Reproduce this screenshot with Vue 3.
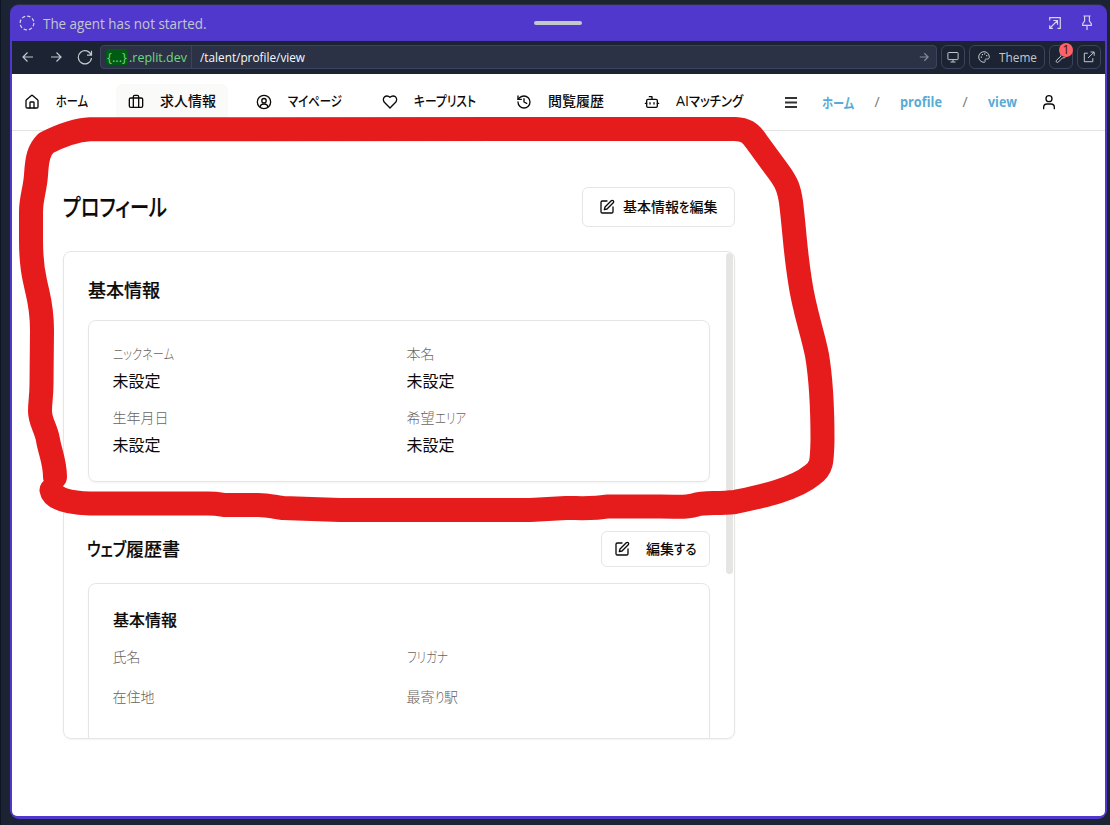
<script setup>
// Condenses a run of text horizontally to the given advance width.
const vFit = {
  mounted(el, { value }) {
    const natural = el.getBoundingClientRect().width
    el.style.width = value + 'px'
    el.style.transform = `scaleX(${value / natural})`
  },
}

const icons = {
  home: '<path d="M15 21v-8a1 1 0 0 0-1-1h-4a1 1 0 0 0-1 1v8"/><path d="M3 10a2 2 0 0 1 .709-1.528l7-5.999a2 2 0 0 1 2.582 0l7 5.999A2 2 0 0 1 21 10v9a2 2 0 0 1-2 2H5a2 2 0 0 1-2-2z"/>',
  briefcase: '<path d="M16 20V4a2 2 0 0 0-2-2h-4a2 2 0 0 0-2 2v16"/><rect width="20" height="14" x="2" y="6" rx="2"/>',
  account: '<path d="M17.500 19.500a5.500 4.500 0 0 0-11 0"/><circle cx="12" cy="10" r="3.300"/><circle cx="12" cy="12" r="10"/>',
  heart: '<path d="M19 14c1.49-1.46 3-3.21 3-5.5A5.5 5.5 0 0 0 16.5 3c-1.76 0-3 .5-4.5 2-1.5-1.5-2.74-2-4.5-2A5.5 5.5 0 0 0 2 8.5c0 2.3 1.5 4.05 3 5.5l7 7Z"/>',
  history: '<path d="M3 12a9 9 0 1 0 9-9 9.75 9.75 0 0 0-6.74 2.74L3 8"/><path d="M3 3v5h5"/><path d="M12 7v5l4 2"/>',
  bot: '<path d="M12 8V4H8"/><rect width="16" height="12" x="4" y="8" rx="2"/><path d="M2 14h2M20 14h2M15 13v2M9 13v2"/>',
}

const nav = [
  { icon: 'home', parts: [['ホーム', 32]] },
  { icon: 'briefcase', parts: [['求人情報', 56]], active: true },
  { icon: 'account', parts: [['マイページ', 54]] },
  { icon: 'heart', parts: [['キープリスト', 62]] },
  { icon: 'history', parts: [['閲覧履歴', 56]] },
  { icon: 'bot', parts: [['AI', 13], ['マッチング', 54]] },
]

const basics = [
  { label: [['ニックネーム', 61]], value: '未設定' },
  { label: [['本名', 28]], value: '未設定' },
  { label: [['生年月日', 56]], value: '未設定' },
  { label: [['希望', 28], ['エリア', 31]], value: '未設定' },
]

const resume = [
  [['氏名', 28]],
  [['フリガナ', 41]],
  [['在住地', 42]],
  [['最寄', 28], ['り', 9.5], ['駅', 14]],
]
</script>

<template>
  <div class="desk">
    <div class="window">
      <header class="agent">
        <svg class="ring" width="16" height="16" viewBox="0 0 16 16"><circle cx="8" cy="8" r="6.9" /></svg>
        <span v-fit="163.5" class="fit">The agent has not started.</span>
        <i class="grip"></i>
        <div class="agent-actions">
          <svg class="line" width="14" height="14" viewBox="0 0 14 14"><path d="M1.7 4.5V1.7h10.6v10.6H9.5M5.3 4.5h4.2v4.2M9.5 4.5l-7.8 7.8M1.7 9.2v3.1h3.1" /></svg>
          <svg class="line" width="12" height="16" viewBox="0 0 12 16"><path d="M2.5 1h7M3.6 1v5.1L1.7 8.6v1.7h8.6V8.6L8.4 6.100V1M6 10.300V15" /></svg>
        </div>
      </header>

      <div class="toolbar">
        <div class="arrows">
          <svg class="line" width="12" height="12" viewBox="0 0 12 12"><path d="M11 6H1M5.500 1.500L1 6l4.500 4.500" /></svg>
          <svg class="line" width="12" height="12" viewBox="0 0 12 12"><path d="M1 6h10M6.500 1.500L11 6l-4.500 4.500" /></svg>
          <svg class="line" width="16" height="16" viewBox="0 0 16 16"><path d="M14.500 1.700v4.500H10M14.200 6.200A6.600 6.600 0 1 0 14.500 9" /></svg>
        </div>
        <div class="address">
          <div class="host"><b v-fit="22" class="fit">{...}</b><span v-fit="58" class="fit">.replit.dev</span></div>
          <div class="path"><span v-fit="105" class="fit">/talent/profile/view</span></div>
          <svg class="go line" width="10" height="10" viewBox="0 0 10 10"><path d="M.8 5h8.400M5.300 1.200L9.200 5 5.300 8.800" /></svg>
        </div>
        <div class="tool square"><svg class="line" width="12" height="12" viewBox="0 0 12 12"><path d="M1.500 1.500h9q.6 0 .6.600v5.900q0 .6-.6.600h-9q-.6 0-.6-.6V2.100q0-.6.6-.6zM6 8.600v2.300M3.500 11h5" /></svg></div>
        <div class="tool theme">
          <svg class="line" width="12" height="12" viewBox="0 0 12 12"><path d="M6 .7a5.300 5.300 0 0 0 0 10.600c1 0 1.400-.7 1.100-1.500-.4-1 .2-1.800 1.200-1.800h1.400c1 0 1.600-.8 1.600-2A5.300 5.300 0 0 0 6 .7z" /><path d="M2.800 6.200h1.200M3.800 3.700h1.200M6.100 2.900h1.200M8.100 4.700h1.200" stroke-width="1.200" /></svg>
          <span v-fit="38" class="fit">Theme</span>
        </div>
        <div class="tool square">
          <svg class="line" width="12" height="12" viewBox="0 0 12 12"><path d="M6 4.500a3 3 0 0 1 4-3.300L8.500 3l.5 1 1 .3 1.300-1.300a3 3 0 0 1-3.700 3.800l-4.300 4.300a1.200 1.200 0 0 1-1.800-1.800L6 5z" /></svg>
          <em class="badge">1</em>
        </div>
        <div class="tool square"><svg class="line" width="12" height="12" viewBox="0 0 12 12"><path d="M4.800 2.200H1.300v8.500h8.500V7.200M7.500 1h3.700v3.700M11 1.200L5 7" /></svg></div>
      </div>

      <main class="page">
        <div class="topbar">
          <nav class="nav">
            <a v-for="item in nav" :key="item.icon" class="nav-item" :class="{ active: item.active }">
              <svg class="icon" width="16" height="16" viewBox="0 0 24 24" v-html="icons[item.icon]"></svg>
              <span class="run"><span v-for="p in item.parts" :key="p[0]" v-fit="p[1]" class="fit">{{ p[0] }}</span></span>
            </a>
          </nav>
          <svg class="menu" width="12" height="11" viewBox="0 0 12 11"><path d="M0 1h12M0 5.500h12M0 10h12" /></svg>
          <div class="crumbs">
            <b v-fit="32" class="fit">ホーム</b><i>/</i>
            <b v-fit="42" class="fit">profile</b><i>/</i>
            <b v-fit="29" class="fit">view</b>
          </div>
          <svg class="icon user" width="16" height="16" viewBox="0 0 24 24"><circle cx="12" cy="7" r="4.500" /><path d="M20 22v-2a5 5 0 0 0-5-5H9a5 5 0 0 0-5 5v2" /></svg>
        </div>

        <section class="profile">
          <div class="title-row">
            <h1><span v-fit="104" class="fit">プロフィール</span></h1>
            <button class="btn big">
              <svg class="icon" width="16" height="16" viewBox="0 0 24 24"><path d="M12 3H5a2 2 0 0 0-2 2v14a2 2 0 0 0 2 2h14a2 2 0 0 0 2-2v-7" /><path d="M18.375 2.625a2.121 2.121 0 1 1 3 3L12 15l-4 1 1-4Z" /></svg>
              <span class="run"><span v-fit="56" class="fit">基本情報</span><span v-fit="10.5" class="fit">を</span><span v-fit="28" class="fit">編集</span></span>
            </button>
          </div>

          <div class="panel">
            <h2><span v-fit="72" class="fit">基本情報</span></h2>
            <div class="card basics">
              <div v-for="(f, i) in basics" :key="i" class="field">
                <div class="label"><span v-for="p in f.label" :key="p[0]" v-fit="p[1]" class="fit">{{ p[0] }}</span></div>
                <div class="value">{{ f.value }}</div>
              </div>
            </div>
            <div class="resume-head">
              <h2><span v-fit="39" class="fit">ウェブ</span><span v-fit="54" class="fit">履歴書</span></h2>
              <button class="btn">
                <svg class="icon" width="16" height="16" viewBox="0 0 24 24"><path d="M12 3H5a2 2 0 0 0-2 2v14a2 2 0 0 0 2 2h14a2 2 0 0 0 2-2v-7" /><path d="M18.375 2.625a2.121 2.121 0 1 1 3 3L12 15l-4 1 1-4Z" /></svg>
                <span class="run"><span v-fit="28" class="fit">編集</span><span v-fit="22.5" class="fit">する</span></span>
              </button>
            </div>
            <div class="card resume">
              <h3>基本情報</h3>
              <div class="grid">
                <div v-for="(f, i) in resume" :key="i" class="label"><span v-for="p in f" :key="p[0]" v-fit="p[1]" class="fit">{{ p[0] }}</span></div>
              </div>
            </div>
            <i class="thumb"></i>
          </div>
        </section>
      </main>
    </div>

    <svg class="marker" width="1110" height="825" viewBox="0 0 1110 825">
      <path d="M55 477C55 462 50 452 48 440C46 428 40 422 40 411C40 402 41.500 396 41.500 384L42 330C42 305 38 296 35 281C32 268 31 255 31 240L31 212C31 198 35 190 36 175C37 158 39 150 46 143C60 136 75 130 90 129.300L735 129C745 129.500 750 132 756 141L778 171C787 183 789 189 791 202C795 235 795 250 800 281C804 310 812 330 817 355C822 385 822.500 420 822.500 440C822 462 822 468 812 475C794 490 758 497 735 502C716 504 704 502 695 505C685 508 680 506.500 660 506.500L607 506.500C595 509 580 508 566 508L530 510L340 510L283 508C275 507 268 505 258 505L225 505C218 504 215 503.500 208 503.500L90 503.500C70 503 53 499 51.500 490" />
    </svg>
  </div>
</template>

<style>
body {
  margin: 0;
}
</style>

<style scoped>
* {
  box-sizing: border-box;
}
.desk {
  position: relative;
  width: 1110px;
  height: 825px;
  padding: 4px 3px 6px 9px;
  background: #1c2333;
  border-left: 1px solid #0e1525;
  font-family: "Open Sans", "Noto Sans CJK JP", sans-serif;
  font-size: 14px;
  overflow: hidden;
}
.window {
  height: 815px;
  padding: 0 2px 2px;
  border-top: 1px solid #2b3245;
  border-radius: 9px;
  background: #5138cc;
  overflow: hidden;
}
.fit {
  display: inline-block;
  white-space: nowrap;
  transform-origin: 0 50%;
  font-feature-settings: "palt";
}
.line,
.icon {
  display: block;
  flex: none;
  fill: none;
  stroke: currentColor;
  stroke-width: 1.2;
}
.icon {
  stroke-width: 2;
  stroke-linecap: round;
  stroke-linejoin: round;
}
.agent {
  position: relative;
  display: flex;
  align-items: center;
  gap: 8px;
  height: 36px;
  padding: 0 12px 0 7px;
  color: #c2c8cc;
}
.ring {
  fill: none;
  stroke: #d5d8e8;
  stroke-width: 1.2;
  stroke-dasharray: 3.4 2.020;
}
.grip {
  position: absolute;
  left: 522px;
  top: 16px;
  width: 48px;
  height: 4px;
  border-radius: 2px;
  background: #c2c8cc;
}
.agent-actions {
  display: flex;
  align-items: center;
  gap: 19px;
  margin-left: auto;
  color: #d5d3f0;
}
.toolbar {
  display: flex;
  align-items: center;
  gap: 4px;
  height: 33px;
  padding: 0 4px 1px 10px;
  background: #1c2333;
  color: #c2c8cc;
}
.arrows {
  display: flex;
  align-items: center;
  gap: 16px;
  width: 74px;
}
.arrows svg:last-child {
  margin-left: -1px;
}
.address {
  display: flex;
  align-items: center;
  flex: 1;
  height: 24px;
  border: 1px solid #3c445c;
  border-radius: 4px;
  background: #2b3245;
  font-size: 13px;
}
.host {
  display: flex;
  align-items: center;
  width: 91px;
  height: 22px;
  padding: 0 0 1px 5px;
  line-height: 16px;
  border-right: 1px solid #3c445c;
  color: #6cd97e;
}
.host b {
  padding: 0 1px;
  border-radius: 3px;
  background: #005c12;
  font-weight: 400;
}
.host span {
  margin-left: 1px;
}
.path {
  flex: 1;
  padding: 0 0 1px 8px;
  color: #f5f9fc;
}
.go {
  margin-right: 7px;
  color: #828a9c;
}
.tool {
  position: relative;
  display: flex;
  align-items: center;
  justify-content: center;
  height: 24px;
  border: 1px solid #3c445c;
  border-radius: 6px;
  font-size: 13px;
}
.tool .line {
  stroke-width: 1;
}
.square {
  width: 24px;
}
.theme {
  gap: 9px;
  width: 76px;
}
.badge {
  position: absolute;
  left: 9px;
  top: -3px;
  width: 14px;
  height: 14px;
  border-radius: 7px;
  background: #ff6166;
  color: #40100f;
  font: normal 12px/14px "Open Sans", sans-serif;
  text-align: center;
}
.page {
  height: 742px;
  border-radius: 0 0 5px 5px;
  background: #fff;
  color: #0c0a09;
}
.topbar {
  display: flex;
  align-items: center;
  height: 57px;
  border-bottom: 1px solid #e4e4e4;
}
.nav {
  display: flex;
  gap: 16px;
}
.nav-item {
  display: flex;
  align-items: center;
  gap: 16px;
  height: 36px;
  padding: 0 12px;
  border-radius: 6px;
  font-weight: 500;
}
.run {
  display: flex;
  margin-top: -2px;
  line-height: 20px;
}
.active {
  background: #fafaf9;
}
.menu {
  margin-left: 30px;
  stroke: #333;
  stroke-width: 1.8;
}
.crumbs {
  display: flex;
  align-items: center;
  margin: -1px 0 0 25px;
  color: #57acd5;
}
.crumbs b {
  font-weight: 700;
}
.crumbs i {
  width: 46px;
  font-style: normal;
  text-align: center;
  color: #78716c;
}
.user {
  margin-left: 24px;
}
.profile {
  width: 672px;
  margin: 56px 0 0 51px;
}
.title-row {
  display: flex;
  align-items: center;
  justify-content: space-between;
  height: 40px;
}
h1,
h2,
h3 {
  margin: 0;
  white-space: nowrap;
}
h1 {
  font-size: 24px;
  line-height: 32px;
  font-weight: 500;
}
h2 {
  font-size: 18px;
  line-height: 28px;
  font-weight: 500;
}
h3 {
  font-size: 16px;
  line-height: 24px;
  font-weight: 500;
}
h1 .fit,
h2 .fit,
h3 {
  -webkit-text-stroke: 0.2px currentColor;
}
.btn {
  display: flex;
  align-items: center;
  gap: 16px;
  width: 109px;
  height: 36px;
  padding: 0 0 0 12px;
  border: 1px solid #e5e5e4;
  border-radius: 6px;
  background: #fff;
  color: inherit;
  font: 500 14px "Noto Sans CJK JP", sans-serif;
}
.big {
  gap: 8px;
  width: 153px;
  height: 40px;
  padding-left: 16px;
}
.panel {
  position: relative;
  height: 488px;
  margin-top: 24px;
  padding: 24px;
  border: 1px solid #e5e5e4;
  border-radius: 8px;
  box-shadow: 0 1px 2px rgba(0, 0, 0, 0.05);
  overflow: hidden;
}
.card {
  padding: 24px;
  border: 1px solid #e5e5e4;
  border-radius: 8px;
  box-shadow: 0 1px 2px rgba(0, 0, 0, 0.05);
}
.basics,
.grid {
  display: grid;
  grid-template-columns: 278px 278px;
  align-content: start;
  column-gap: 16px;
}
.basics {
  height: 162px;
  margin-top: 16px;
  padding-top: 23px;
  row-gap: 16px;
}
.field {
  height: 48px;
}
.label {
  display: flex;
  height: 20px;
  margin-left: -0.5px;
  line-height: 20px;
  color: #6a635e;
  font-weight: 300;
}
.value {
  margin: 5px 0 0 -0.5px;
  font-size: 16px;
  line-height: 24px;
}
.resume-head {
  display: flex;
  align-items: center;
  justify-content: space-between;
  margin-top: 49px;
}
.resume-head h2 {
  margin-left: -1px;
}
.resume {
  height: 300px;
  margin-top: 16px;
}
.grid {
  margin-top: 15px;
  row-gap: 20px;
}
.thumb {
  position: absolute;
  top: 1px;
  right: 1px;
  width: 7px;
  height: 321px;
  border-radius: 4px;
  background: #e5e5e3;
}
.marker {
  position: absolute;
  left: -1px;
  top: 0;
  pointer-events: none;
}
.marker path {
  fill: none;
  stroke: #e61c1c;
  stroke-width: 24;
  stroke-linecap: round;
  stroke-linejoin: round;
}
</style>
